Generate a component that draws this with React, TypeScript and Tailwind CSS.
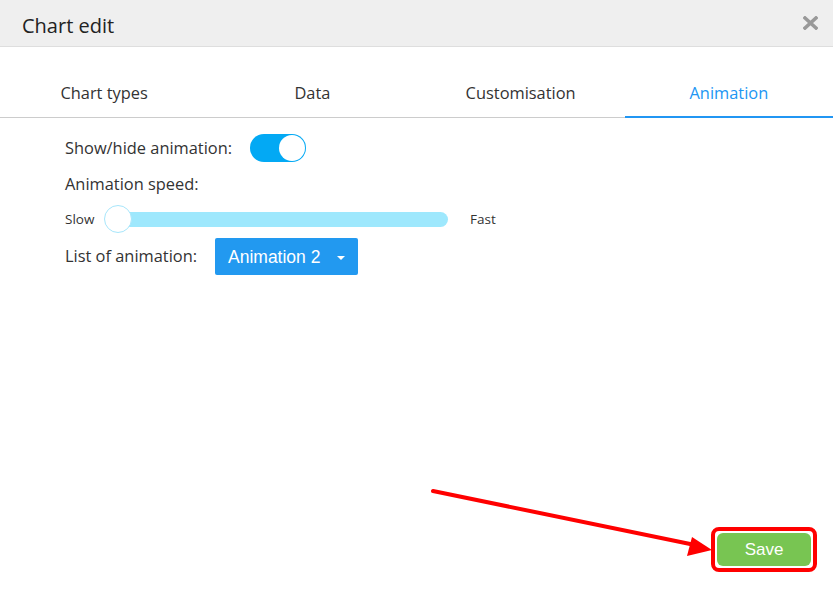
import { useState } from 'react'

const tabs = ['Chart types', 'Data', 'Customisation', 'Animation']

function CloseIcon() {
  return (
    <svg width="15" height="14" viewBox="0 0 15 14" className="text-[#999]">
      <path d="M2 2 L13 12 M13 2 L2 12" stroke="currentColor" strokeWidth="3.6" strokeLinecap="square" />
    </svg>
  )
}

function Arrow() {
  // annotation overlaid on the screenshot
  return (
    <svg className="pointer-events-none absolute left-0 top-0" width="833" height="599">
      <line x1="433" y1="491" x2="695" y2="545" stroke="#ff0000" strokeWidth="4" strokeLinecap="round" />
      <polygon points="712,550 692,537 687,556" fill="#ff0000" />
    </svg>
  )
}

export default function App() {
  const [active, setActive] = useState(3)
  const [on, setOn] = useState(true)

  return (
    <div className="relative flex h-[599px] w-[833px] flex-col bg-white font-['Open_Sans',sans-serif] text-[#333]">
      <header className="flex h-[47px] items-center justify-between border-b border-[#dedede] bg-[#efefef] pl-[22px] pr-[15px]">
        <h1 className="pt-[5px] text-[20px] text-[#222]">Chart edit</h1>
        <CloseIcon />
      </header>

      <nav className="mt-[23px] grid grid-cols-4">
        {tabs.map((t, i) => (
          <button
            key={t}
            onClick={() => setActive(i)}
            className={
              i === active
                ? 'flex h-[48px] items-center justify-center pb-[2px] text-[16.4px] text-[#2196f3] shadow-[inset_0_-2px_0_#2196f3]'
                : 'flex h-[48px] items-center justify-center pb-[2px] text-[16.4px] text-[#333] shadow-[inset_0_-1px_0_#cccccc]'
            }
          >
            {t}
          </button>
        ))}
      </nav>

      <section className="flex flex-1 flex-col pl-[65px] text-[16.4px]">
        <div className="mt-[16px] flex h-[28px] items-center gap-[18px]">
          <span>Show/hide animation:</span>
          <button
            onClick={() => setOn(!on)}
            className={
              on
                ? 'flex h-[28px] w-[56px] items-center justify-end rounded-full bg-[#03a9f4] px-[1px]'
                : 'flex h-[28px] w-[56px] items-center justify-start rounded-full bg-[#ccc] px-[1px]'
            }
          >
            <span className="h-[26px] w-[26px] rounded-full bg-white" />
          </button>
        </div>

        <div className="mt-[10px] flex h-[24px] items-center">Animation speed:</div>

        <div className="mt-[9px] flex h-[28px] items-center text-[13.5px]">
          <span className="w-[39px]">Slow</span>
          <div className="flex h-[28px] w-[344px] items-center">
            <span className="relative z-10 h-[28px] w-[28px] shrink-0 rounded-full border border-[#a7e6fb] bg-white" />
            <span className="-ml-[14px] h-[15px] flex-1 rounded-full bg-[#9ee8fd]" />
          </div>
          <span className="ml-[22px]">Fast</span>
        </div>

        <div className="mt-[5px] flex h-[37px] items-center gap-[18px]">
          <span>List of animation:</span>
          <button className="flex h-[37px] w-[143px] items-center rounded-[2px] bg-[#2299f0] pl-[13px] pt-[1px] font-['Liberation_Sans',sans-serif] text-[17.5px] text-white">
            Animation 2
            <svg width="8" height="4" viewBox="0 0 8 4" className="ml-[17px] mt-[2px]">
              <path d="M0 0 L8 0 L4 4 Z" fill="white" />
            </svg>
          </button>
        </div>
      </section>

      <footer className="flex justify-end pb-[27px] pr-[16px]">
        <div className="rounded-[8px] border-4 border-[#ff0000] p-[2px]">
          <button className="flex h-[33px] w-[94px] items-center justify-center rounded-[6px] bg-[#78c552] pt-[1px] font-['Liberation_Sans',sans-serif] text-[17px] text-white">
            Save
          </button>
        </div>
      </footer>

      <Arrow />
    </div>
  )
}
